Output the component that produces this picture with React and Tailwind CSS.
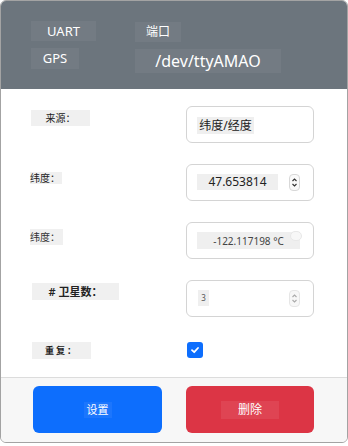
import React from "react";

const font = { fontFamily: '"Noto Sans", "Noto Sans CJK SC", sans-serif' };

function Spinner({ faint }) {
  return (
    <div className={`w-[11px] h-[17px] rounded-[4px] border ${faint ? "border-[#e6e6e6] bg-[#f7f7f7]" : "border-[#d8d8d8] bg-[#fafafa]"} flex flex-col items-center justify-center`}>
      <svg width="7" height="13" viewBox="0 0 7 13">
        <path d="M1.5 5 L3.5 3 L5.5 5" fill="none" stroke={faint ? "#aaa" : "#333"} strokeWidth="1.1" />
        <path d="M1.5 8 L3.5 10 L5.5 8" fill="none" stroke={faint ? "#aaa" : "#333"} strokeWidth="1.1" />
      </svg>
    </div>
  );
}

export default function App() {
  return (
    <div className="w-[348px] h-[446px] bg-white" style={font}>
      <div className="w-[348px] h-[443px] border border-[#a3a3a3] rounded-[6px] overflow-hidden flex flex-col">
        {/* header */}
        <div className="h-[88px] bg-[#6c757d] flex text-white shrink-0">
          <div className="pl-[30px] pt-[20px] w-[134px] flex flex-col gap-[7px]">
            <div className="w-[65px] h-[20px] bg-[#737b83] flex items-center justify-center text-[13px] leading-none">UART</div>
            <div className="w-[48px] h-[21px] bg-[#737b83] flex items-center justify-center text-[13px] leading-none">GPS</div>
          </div>
          <div className="pt-[21px] flex flex-col gap-[7px]">
            <div className="w-[46px] h-[20px] bg-[#737b83] flex items-center justify-center text-[12px] leading-none">端口</div>
            <div className="w-[146px] h-[24px] bg-[#737b83] flex items-center justify-center text-[16px] leading-none">/dev/ttyAMAO</div>
          </div>
        </div>

        {/* body */}
        <div className="flex-1 pt-[17px] pl-[29px] flex flex-col gap-[21px] text-[#222]">
          <div className="flex h-[37px]">
            <div className="w-[156px] pt-[4px] pl-[1px]">
              <div className="w-[59px] h-[16px] bg-[#f0f0f0] flex items-center justify-center text-[10px] leading-none">来源：</div>
            </div>
            <div className="w-[128px] h-[37px] border border-[#d4d4d4] rounded-[6px] pl-[10px] pt-[10px]">
              <div className="w-[57px] h-[17px] bg-[#efefef] flex items-center justify-center text-[12px] leading-none text-[#222]">纬度/经度</div>
            </div>
          </div>

          <div className="flex h-[37px]">
            <div className="w-[156px] pt-[8px]">
              <div className="w-[32px] h-[12px] bg-[#f0f0f0] flex items-center text-[10px] leading-none">纬度：</div>
            </div>
            <div className="w-[128px] h-[37px] border border-[#d4d4d4] rounded-[6px] pl-[10px] pt-[9px] flex items-start gap-[11px]">
              <div className="w-[81px] h-[16px] bg-[#efefef] flex items-center justify-center text-[12px] leading-none">47.653814</div>
              <Spinner />
            </div>
          </div>

          <div className="flex h-[37px]">
            <div className="w-[156px] pt-[7px]">
              <div className="w-[33px] h-[16px] bg-[#f0f0f0] flex items-center text-[10px] leading-none text-[#333]">纬度：</div>
            </div>
            <div className="w-[128px] h-[37px] border border-[#d4d4d4] rounded-[6px] pl-[10px] pt-[9px] relative">
              <div className="w-[103px] h-[17px] bg-[#efefef] flex items-center justify-center text-[10px] leading-none text-[#444]">-122.117198 °C</div>
              <div className="absolute left-[103px] top-[8px] w-[12px] h-[10px] rounded-[5px] bg-[#f7f7f7] border border-[#e8e8e8]"></div>
            </div>
          </div>

          <div className="flex h-[37px]">
            <div className="w-[156px] pt-[3px] pl-[2px]">
              <div className="w-[87px] h-[17px] bg-[#f0f0f0] flex items-center justify-center text-[11px] leading-none font-semibold">#&nbsp;卫星数：</div>
            </div>
            <div className="w-[128px] h-[37px] border border-[#d4d4d4] rounded-[6px] pl-[11px] pt-[9px] flex items-start gap-[80px]">
              <div className="w-[11px] h-[16px] bg-[#efefef] flex items-center justify-center text-[8px] leading-none text-[#555]">3</div>
              <Spinner faint />
            </div>
          </div>

          <div className="flex h-[17px] mt-[4px]">
            <div className="w-[157px] pl-[2px]">
              <div className="w-[59px] h-[17px] bg-[#f0f0f0] flex items-center pl-[13px] text-[9px] leading-none font-semibold tracking-[2px]">重复：</div>
            </div>
            <div className="w-[16px] h-[16px] rounded-[3px] bg-[#0d6efd] flex items-center justify-center">
              <svg width="10" height="10" viewBox="0 0 10 10">
                <path d="M2 5.2 L4.2 7.2 L8 3" fill="none" stroke="white" strokeWidth="1.8" strokeLinecap="round" strokeLinejoin="round" />
              </svg>
            </div>
          </div>
        </div>

        {/* footer */}
        <div className="h-[65px] shrink-0 border-t border-[#dcdcdc] bg-[#f7f7f7] pt-[8px] pl-[32px] flex gap-[24px]">
          <div className="w-[129px] h-[47px] rounded-[6px] bg-[#0d6efd] flex items-center justify-center">
            <div className="w-[28px] h-[16px] bg-[#1c76fd] flex items-center justify-center text-white text-[11px] leading-none">设置</div>
          </div>
          <div className="w-[128px] h-[47px] rounded-[6px] bg-[#dc3545] flex items-center justify-center">
            <div className="w-[58px] h-[18px] bg-[#df4453] flex items-center justify-center text-white text-[12px] leading-none">删除</div>
          </div>
        </div>
      </div>
    </div>
  );
}
